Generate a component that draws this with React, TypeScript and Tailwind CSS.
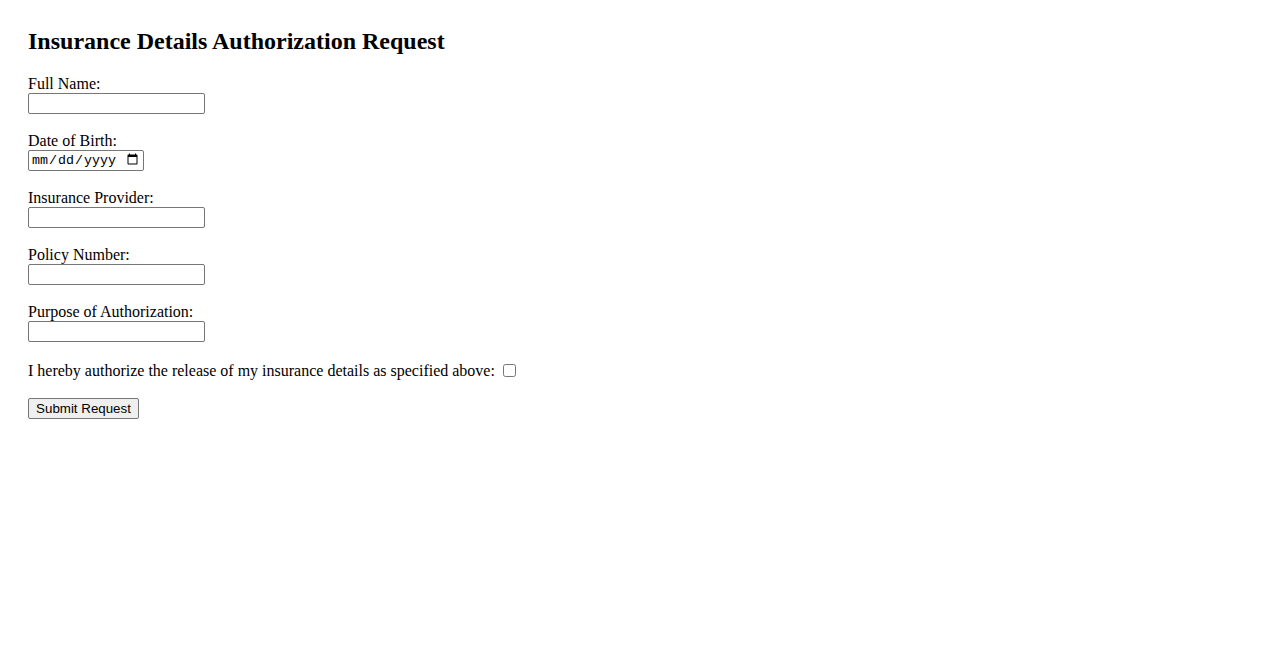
import React from "react";

const fields = [
  { id: "fullName", label: "Full Name:", type: "text" },
  { id: "dob", label: "Date of Birth:", type: "date" },
  { id: "provider", label: "Insurance Provider:", type: "text" },
  { id: "policy", label: "Policy Number:", type: "text" },
  { id: "purpose", label: "Purpose of Authorization:", type: "text" },
];

const App = () => {
  return (
    <div className="min-h-[650px] bg-white px-[28px] pt-[28px] text-[16px] text-black font-['Liberation_Serif','Times_New_Roman',serif]">
      <h2 className="text-[24px] font-bold leading-[27.6px] mb-[19px]">
        Insurance Details Authorization Request
      </h2>

      <form className="flex flex-col items-start" onSubmit={(e) => e.preventDefault()}>
        {fields.map((f) => (
          <div key={f.id} className="flex flex-col items-start mb-[18px]">
            <label htmlFor={f.id} className="leading-[18px]">
              {f.label}
            </label>
            {f.type === "date" ? (
              <input
                id={f.id}
                type="date"
                className="h-[21px] w-[116px] border border-[#767676] rounded-[2px] px-[2px] bg-white text-[13.33px] leading-[normal] font-['Liberation_Mono','Courier_New',monospace]"
              />
            ) : (
              <input
                id={f.id}
                type="text"
                className="h-[21px] w-[177px] border border-[#767676] rounded-[2px] px-[2px] bg-white text-[13.33px] leading-[normal] font-['Liberation_Sans',Arial,sans-serif]"
              />
            )}
          </div>
        ))}

        <div className="flex items-center h-[21px] mt-[1px] mb-[16px]">
          <label htmlFor="consent" className="leading-[18px]">
            I hereby authorize the release of my insurance details as specified above:
          </label>
          <input id="consent" type="checkbox" className="ml-[8px] w-[13px] h-[13px] -mt-[2px]" />
        </div>

        <button
          type="submit"
          className="h-[21px] w-[111px] border border-[#767676] rounded-[2px] bg-[#efefef] text-[13.33px] leading-[normal] font-['Liberation_Sans',Arial,sans-serif]"
        >
          Submit Request
        </button>
      </form>
    </div>
  );
};

export default App;
